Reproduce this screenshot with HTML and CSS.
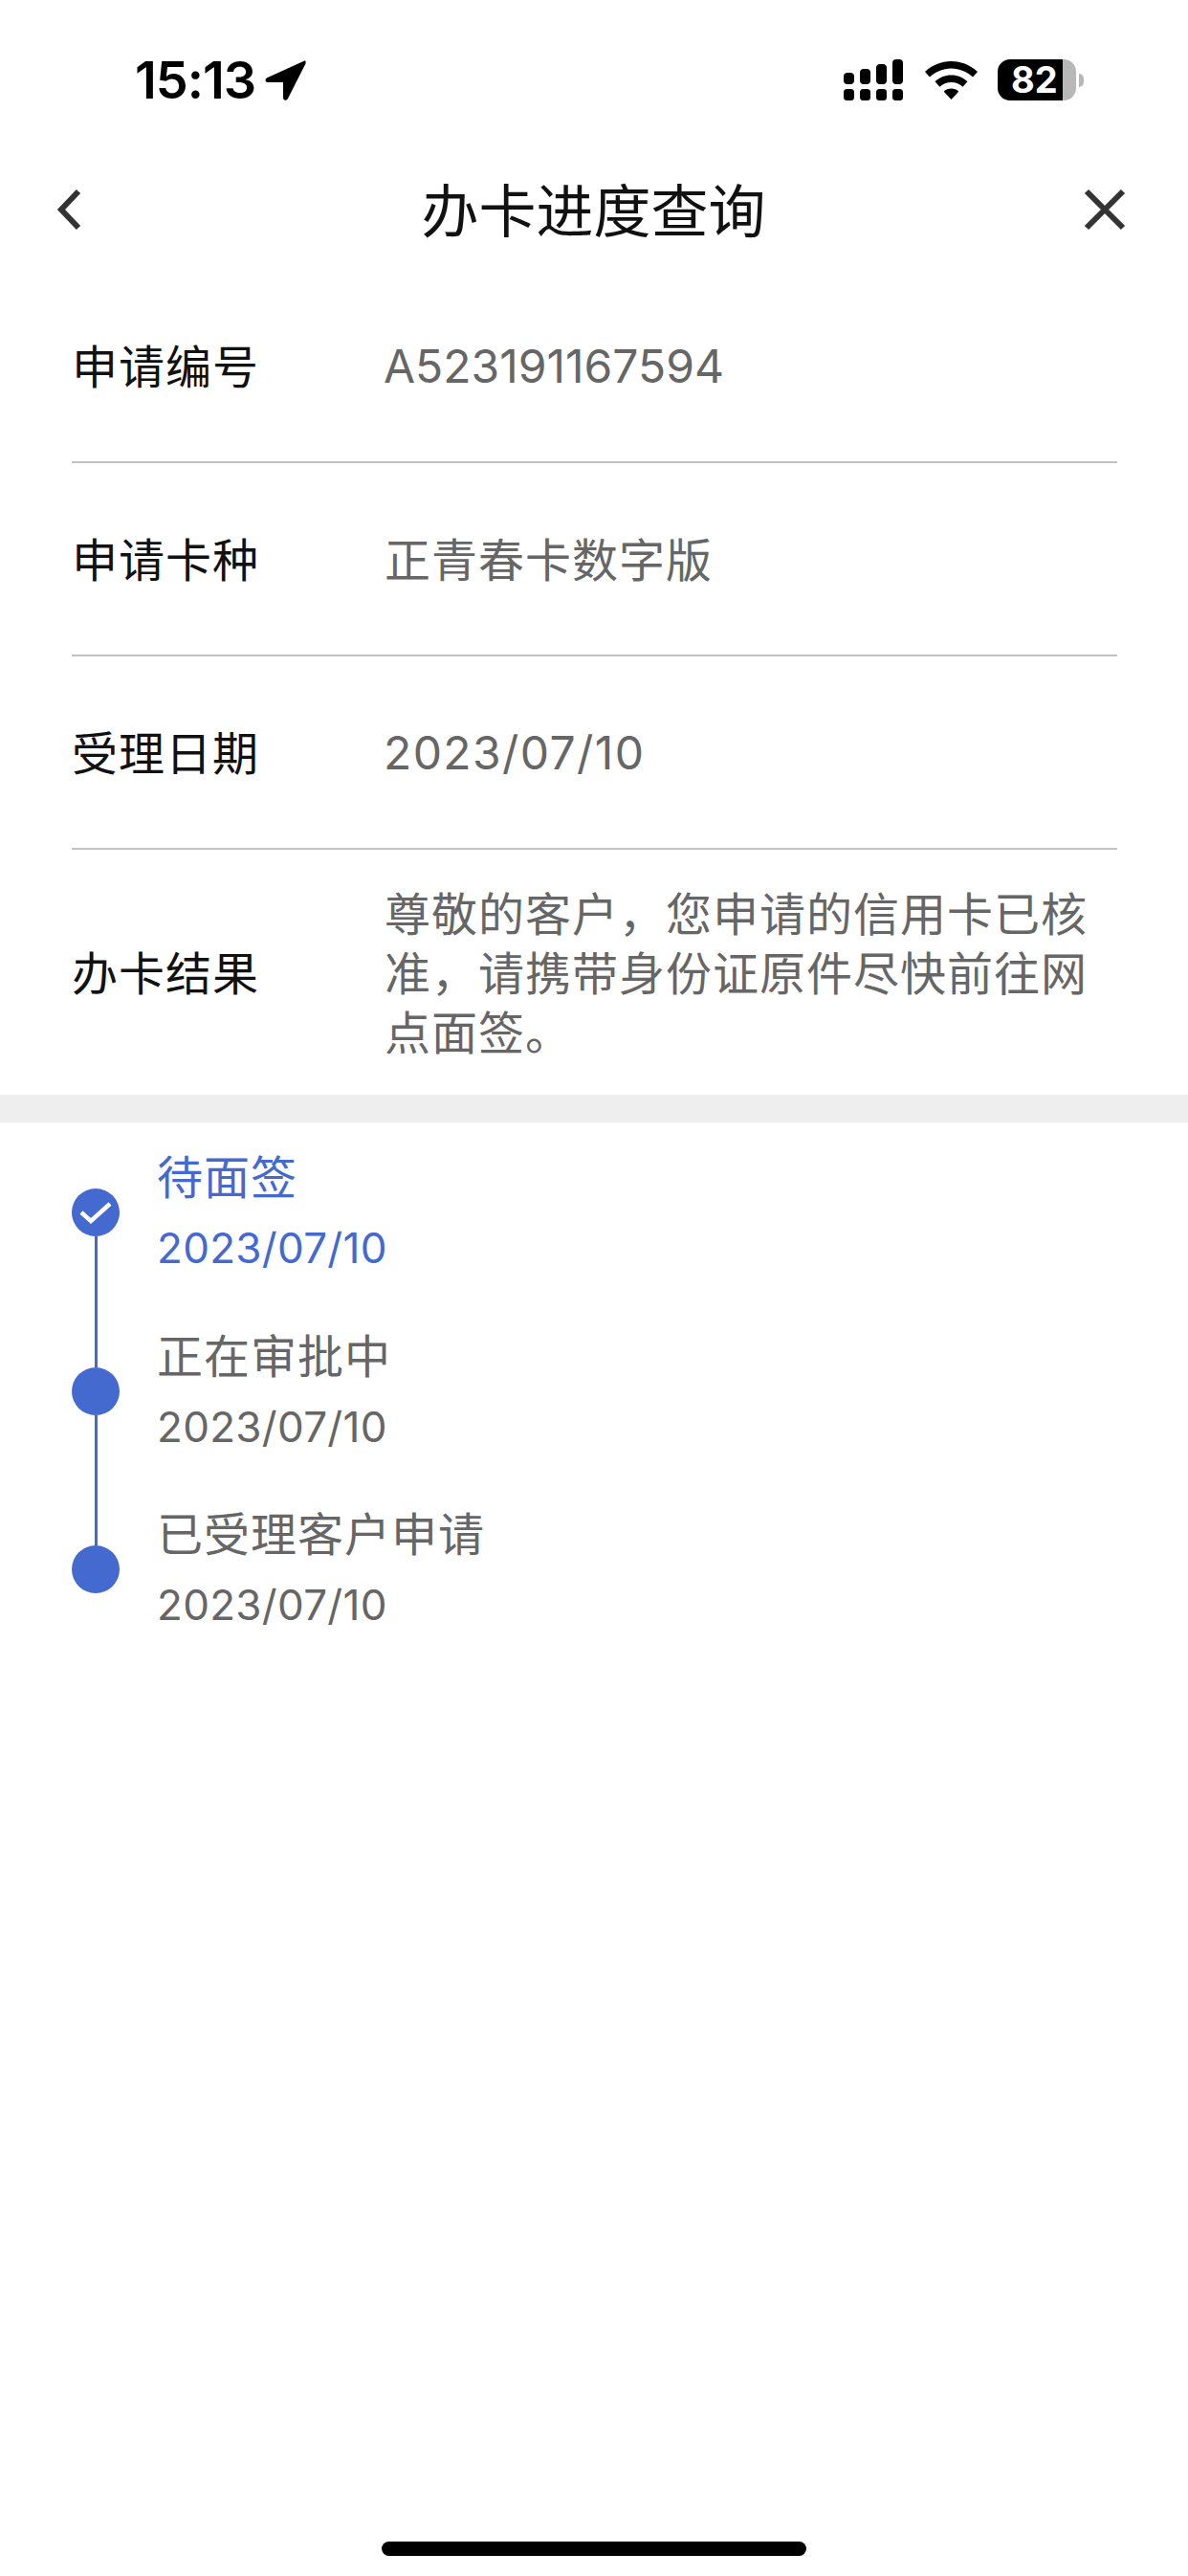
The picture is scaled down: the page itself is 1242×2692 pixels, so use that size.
FILE: index.html
```html
<!DOCTYPE html>
<html lang="zh-CN">
<head>
<meta charset="utf-8">
<title>办卡进度查询</title>
<link rel="stylesheet" href="styles.css">
</head>
<body>
<div class="screen">
  <header class="status">
    <div class="status-left">
      <span class="clock">15:13</span>
      <svg class="arrow" viewBox="0 0 40 40"><path d="M38 1.500 3 17.500c-2.600 1.300-1.800 4.400 1 4.400h14.200v14.400c0 2.900 3.300 3.500 4.500 1L39.500 4c.7-1.800-.2-3.100-1.500-2.500z"/></svg>
    </div>
    <div class="status-right">
      <svg class="signal" viewBox="0 0 62 43">
        <rect x="0" y="14" width="11" height="12" rx="4"/><rect x="17" y="10" width="11" height="16" rx="4"/><rect x="34" y="5" width="11" height="21" rx="4"/><rect x="51" y="0" width="11" height="26" rx="4"/>
        <rect x="0" y="31" width="11" height="12" rx="3.500"/><rect x="17" y="31" width="11" height="12" rx="3.500"/><rect x="34" y="31" width="11" height="12" rx="3.500"/><rect x="51" y="31" width="11" height="12" rx="3.500"/>
      </svg>
      <svg class="wifi" viewBox="0 0 55 40">
        <path d="M27.500 0C17 0 7.500 4 0 11l5 5.500C11 11 19 7.500 27.500 7.500S44 11 50 16.500l5-5.500C47.500 4 38 0 27.500 0z"/>
        <path d="M27.500 14.500c-6.500 0-12.500 2.500-17 6.700l5 5.500c3-2.900 7.300-4.700 12-4.700s9 1.800 12 4.700l5-5.500c-4.500-4.200-10.500-6.700-17-6.700z"/>
        <path d="M27.500 28.500c-3 0-5.800 1.200-7.700 3.200l7.700 8.300 7.700-8.300c-1.900-2-4.700-3.200-7.700-3.200z"/>
      </svg>
      <div class="battery">
        <div class="battery-body"><span class="battery-level">82</span></div>
        <span class="battery-nub"></span>
      </div>
    </div>
  </header>

  <nav class="nav">
    <svg class="nav-icon" viewBox="0 0 40 44"><path d="M27 3 9 22l18 19" /></svg>
    <h1 class="nav-title">办卡进度查询</h1>
    <svg class="nav-icon" viewBox="0 0 44 44"><path d="M3 3l38 38M41 3 3 41" /></svg>
  </nav>

  <section class="details">
    <div class="row"><span class="label">申请编号</span><span class="value latin">A523191167594</span></div>
    <div class="row"><span class="label">申请卡种</span><span class="value">正青春卡数字版</span></div>
    <div class="row"><span class="label">受理日期</span><span class="value latin date">2023/07/10</span></div>
    <div class="row row-tall"><span class="label">办卡结果</span><span class="value">尊敬的客户，您申请的信用卡已核准，请携带身份证原件尽快前往网点面签。</span></div>
  </section>

  <div class="band"></div>

  <section class="timeline">
    <div class="step step-active">
      <div class="marker">
        <span class="dot"><svg class="check" viewBox="0 0 34 24"><path d="M2 12l10 9L32 3"/></svg></span>
        <span class="line"></span>
      </div>
      <div class="step-text"><div class="step-title">待面签</div><div class="step-date">2023/07/10</div></div>
    </div>
    <div class="step">
      <div class="marker"><span class="dot"></span><span class="line"></span></div>
      <div class="step-text"><div class="step-title">正在审批中</div><div class="step-date">2023/07/10</div></div>
    </div>
    <div class="step">
      <div class="marker"><span class="dot"></span></div>
      <div class="step-text"><div class="step-title">已受理客户申请</div><div class="step-date">2023/07/10</div></div>
    </div>
  </section>

  <div class="home-bar"></div>
</div>
</body>
</html>
```

FILE: styles.css
```css
* { box-sizing: border-box; }
html, body { margin: 0; padding: 0; background: #fff; }
.screen {
  width: 1242px;
  height: 2692px;
  display: flex;
  flex-direction: column;
  font-family: "Noto Sans CJK SC", "Noto Sans", sans-serif;
  color: #111;
  overflow: hidden;
}
.status {
  height: 150px;
  display: flex;
  justify-content: space-between;
  padding: 62px 109px 0 141px;
  align-items: flex-start;
}
.status-left { display: flex; align-items: center; gap: 9px; height: 43px; }
.clock { font-family: Inter, sans-serif; font-weight: 600; font-size: 54px; line-height: 43px; letter-spacing: -1px; color: #000; }
.arrow { width: 44px; height: 44px; fill: #000; }
.status-right { display: flex; align-items: center; height: 43px; }
.signal { width: 62px; height: 43px; fill: #000; margin-right: 23px; }
.wifi { width: 55px; height: 40px; fill: #000; margin-right: 21px; }
.battery { display: flex; align-items: center; gap: 3px; }
.battery-body {
  width: 82px;
  height: 43px;
  border-radius: 13px;
  background: linear-gradient(90deg, #000 68px, #b8b8b8 68px);
  display: flex;
  align-items: center;
  padding-left: 14px;
}
.battery-level { font-family: Inter, sans-serif; font-weight: 700; font-size: 38px; line-height: 43px; color: #fff; }
.battery-nub { width: 5px; height: 14px; background: #b8b8b8; border-radius: 0 5px 5px 0; }

.nav {
  height: 132px;
  display: flex;
  align-items: center;
  justify-content: space-between;
  padding: 5px 65px 0 53px;
}
.nav-title { margin: -3px 0 0 11px; font-size: 60px; font-weight: 400; line-height: 140px; color: #111; }
.nav-icon { width: 44px; height: 44px; fill: none; stroke: #333; stroke-width: 6; }

.details { padding: 0 74px 0 75px; }
.row {
  height: 202px;
  display: flex;
  align-items: center;
  border-bottom: 2px solid #c2c2c2;
}
.row-tall { height: 256px; border-bottom: 0; }
.label { flex: 0 0 327px; font-size: 48px; letter-spacing: 1px; margin-top: -5px; color: #111; }
.value { flex: 1; font-size: 48px; letter-spacing: 1px; line-height: 62px; margin-top: -5px; color: #666; }
.latin { font-family: Inter, sans-serif; letter-spacing: 0; margin-top: 2px; margin-left: -1px; }
.date { letter-spacing: 1.4px; }

.band { height: 29px; background: #eeeeee; }

.timeline { padding: 1px 0 0 75px; }
.step { height: 186.500px; display: flex; }
.marker { width: 50px; display: flex; flex-direction: column; align-items: center; padding-top: 68px; margin-right: 39px; margin-bottom: -68px; }
.dot { flex: none; width: 50px; height: 50px; border-radius: 50%; background: #4469cf; display: flex; align-items: center; justify-content: center; }
.check { width: 34px; height: 24px; fill: none; stroke: #fff; stroke-width: 4.500; }
.line { flex: 1; width: 3px; background: #4469cf; }
.step-text { padding-top: 18px; }
.step-title { font-size: 48px; line-height: 70px; letter-spacing: 1px; color: #666; }
.step-date { font-family: Inter, sans-serif; font-size: 44px; line-height: 56px; letter-spacing: .3px; margin-top: 14px; color: #666; }
.step-active .step-title, .step-active .step-date { color: #4469cf; }

.home-bar { width: 444px; height: 15px; border-radius: 8px; background: #000; margin: auto auto 21px; }
```
